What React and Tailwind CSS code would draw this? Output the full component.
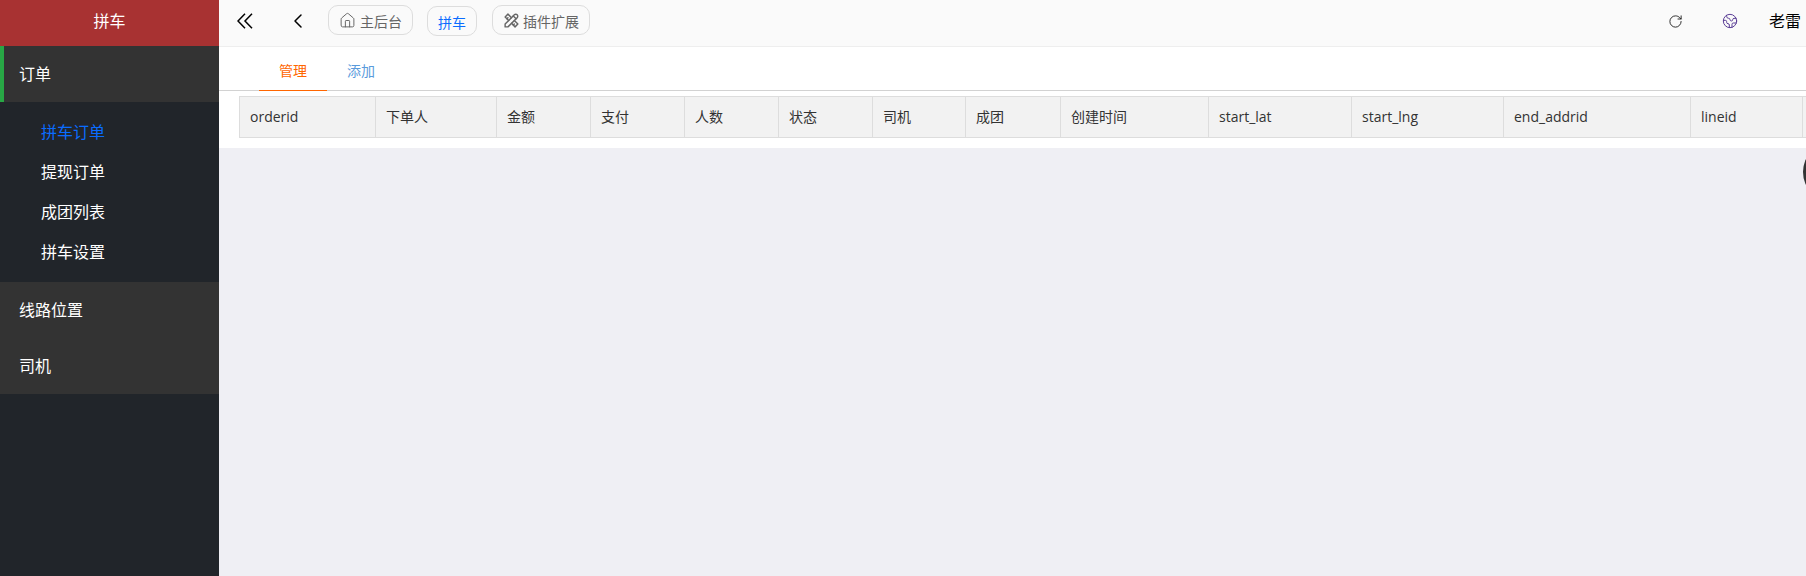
import { ChevronLeft, House, RotateCw, Earth } from 'lucide-react';
import { TbTools } from 'react-icons/tb';

const font = 'font-["Open_Sans","Noto_Sans_CJK_SC",sans-serif]';

const subMenu = [
  { label: '拼车订单', active: true },
  { label: '提现订单' },
  { label: '成团列表' },
  { label: '拼车设置' }
];

const columns = [
  { label: 'orderid', width: 'w-[136px]' },
  { label: '下单人', width: 'w-[121px]' },
  { label: '金额', width: 'w-[94px]' },
  { label: '支付', width: 'w-[94px]' },
  { label: '人数', width: 'w-[94px]' },
  { label: '状态', width: 'w-[94px]' },
  { label: '司机', width: 'w-[93px]' },
  { label: '成团', width: 'w-[95px]' },
  { label: '创建时间', width: 'w-[148px]' },
  { label: 'start_lat', width: 'w-[143px]' },
  { label: 'start_lng', width: 'w-[152px]' },
  { label: 'end_addrid', width: 'w-[187px]' },
  { label: 'lineid', width: 'w-[112px]' },
  { label: '', width: 'w-[100px]' }
];

function Sidebar() {
  return (
    <aside className="flex w-[219px] shrink-0 flex-col bg-[#21252a] text-white">
      <div className="flex h-[46px] items-center justify-center bg-[#a83232] pb-1 text-base">拼车</div>
      <div className="flex h-14 items-center border-l-4 border-[#28a745] bg-[#333333] pl-[15px] text-base">订单</div>
      <ul className="py-2.5">
        {subMenu.map((item) => (
          <li
            key={item.label}
            className={`flex h-10 items-center pl-[41px] text-base ${item.active ? 'text-[#0a6cff]' : 'text-white'}`}
          >
            {item.label}
          </li>
        ))}
      </ul>
      <div className="flex h-14 items-center bg-[#333333] pl-[19px] text-base">线路位置</div>
      <div className="flex h-14 items-center bg-[#333333] pl-[19px] text-base">司机</div>
    </aside>
  );
}

function Crumb({ children, className = '' }) {
  return (
    <span className={`flex h-[30px] items-center rounded-[10px] border border-[#dddddd] px-2.5 pt-1 text-sm ${className}`}>
      {children}
    </span>
  );
}

function DoubleChevron() {
  return (
    <svg width="16" height="16" viewBox="0 0 16 16" fill="none" stroke="currentColor" strokeWidth="1.5" className="mt-0.5 text-black">
      <path d="M8 .8 1 8l7 7.2M15 .8 8 8l7 7.2" />
    </svg>
  );
}

function TopBar() {
  return (
    <header className="flex h-[47px] shrink-0 items-center border-b border-[#eeeeee] bg-[#fafafa] pb-1.5 pl-[18px] pr-[5px]">
      <DoubleChevron />
      <ChevronLeft size={24} strokeWidth={1.5} className="ml-[33px] mt-0.5 text-black" />
      <Crumb className="ml-[18px] text-[#666666]">
        <House size={17} strokeWidth={1.4} className="-mt-1 mr-1" />
        主后台
      </Crumb>
      <Crumb className="ml-[14px] mt-0.5 pt-[3px] text-[#0a6cff]">拼车</Crumb>
      <Crumb className="ml-[15px] text-[#666666]">
        <TbTools size={17} className="-mt-1 mr-[3px]" />
        插件扩展
      </Crumb>
      <div className="ml-auto mt-0.5 flex items-center text-black">
        <RotateCw size={15} strokeWidth={1.5} className="text-[#222222]" />
        <Earth size={16} strokeWidth={1.5} className="ml-[39px] text-[#5b3e96]" />
        <span className="ml-[31px] text-base">老雷</span>
      </div>
    </header>
  );
}

export default function App() {
  return (
    <div className={`flex h-[576px] w-[1806px] overflow-hidden bg-[#efeff4] ${font}`}>
      <Sidebar />
      <main className="relative flex min-w-0 flex-1 flex-col overflow-hidden">
        <TopBar />
        <section className="bg-white pb-2.5">
          <div className="flex h-[44px] border-b border-[#d2d2d2] pl-10 text-sm">
            <span className="-mb-px flex w-[68px] items-center justify-center border-b border-[#ff6600] pt-1 text-[#ff6600]">管理</span>
            <span className="flex w-[68px] items-center justify-center pt-1 text-[#5a9bdc]">添加</span>
          </div>
          <div className="overflow-hidden pl-5 pt-[5px]">
            <table className="w-[1664px] table-fixed border-collapse text-sm text-[#333333]">
              <thead>
                <tr className="h-[41px] bg-[#f2f2f2]">
                  {columns.map((col) => (
                    <th key={col.label} className={`${col.width} border border-[#dddddd] px-2.5 text-left font-normal`}>
                      {col.label}
                    </th>
                  ))}
                </tr>
              </thead>
            </table>
          </div>
        </section>
        <div className="absolute right-[-57px] top-[142px] size-[60px] rounded-full bg-[#333333]" />
      </main>
    </div>
  );
}
